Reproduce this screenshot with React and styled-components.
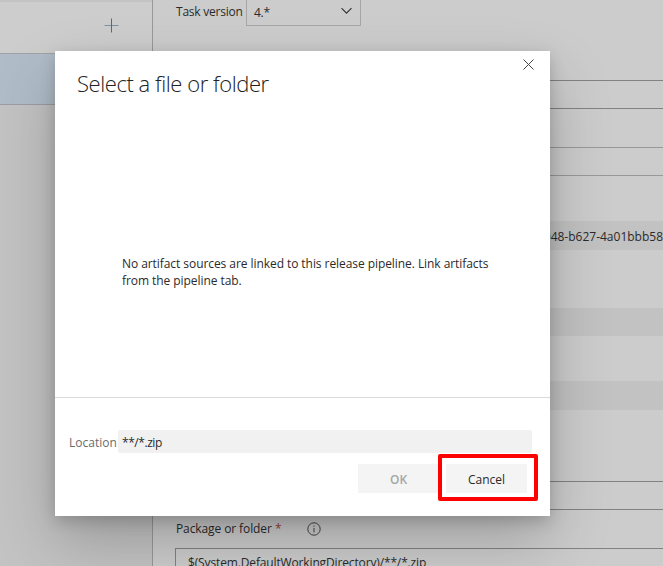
import React from "react";
import styled, { createGlobalStyle } from "styled-components";

const GlobalStyle = createGlobalStyle`
  * { box-sizing: border-box; }
  body { margin: 0; font-family: "Open Sans", "Noto Sans", sans-serif; font-size: 12px; color: #2a2a2a; }
`;

const Page = styled.div`
  position: relative;
  display: flex;
  width: 663px;
  height: 566px;
  overflow: hidden;
  background: #cccccc;
`;

const TaskList = styled.aside`
  width: 153px;
  flex: none;
  border-right: 1px solid #999999;
  background: #c3c3c3;
`;

const TaskHeader = styled.div`
  display: flex;
  justify-content: flex-end;
  align-items: center;
  height: 54px;
  padding: 0 33px 4px 0;
  border-top: 2px solid #c3c3c3;
  border-bottom: 1px solid #a0a3a5;
  background: #cdcdcd;
`;

const SelectedTask = styled.div`
  height: 51px;
  background: #b0bdc8;
  border-bottom: 1px solid #9b9fa3;
`;

const Form = styled.main`
  flex: 1;
  min-width: 0;
  display: flex;
  flex-direction: column;
  padding-left: 22px;
`;

const VersionRow = styled.div`
  display: flex;
  align-items: flex-start;
  height: 26px;
  flex: none;
  margin-bottom: 54px;
`;

const Text = styled.span`
  font-size: ${(p) => p.$size || 12}px;
  line-height: ${(p) => p.$line || 16}px;
  letter-spacing: ${(p) => p.$track || 0}px;
  color: ${(p) => p.$color || "#2a2a2a"};
  font-weight: ${(p) => p.$weight || 400};
  white-space: pre-line;
`;

const VersionLabel = styled.div`
  width: 71px;
  padding: 3px 0 0 1px;
  white-space: nowrap;
`;

const Select = styled.div`
  display: flex;
  justify-content: space-between;
  align-items: flex-start;
  width: 115px;
  height: 26px;
  padding: 5px 7px 0 7px;
  border: 1px solid #a6a6a6;
  border-top: 0;
`;

const Chevron = styled.svg`
  margin-top: 2px;
`;

const Input = styled.div`
  flex: none;
  height: 29px;
  margin-bottom: ${(p) => p.$gap}px;
  padding: 5px 12px;
  border: 1px solid ${(p) => p.$line || "#828282"};
  border-right: 0;
`;

const ReadonlyBand = styled.div`
  flex: none;
  display: flex;
  justify-content: flex-end;
  align-items: center;
  height: ${(p) => p.$height}px;
  margin-bottom: ${(p) => p.$gap}px;
  padding-top: 2px;
  background: #c2c2c2;
  white-space: nowrap;
`;

const FieldLabel = styled.div`
  flex: none;
  display: flex;
  align-items: center;
  height: 16px;
  margin-bottom: 11px;
  padding-left: 1px;
`;

const InfoIcon = styled.svg`
  margin-left: 25px;
`;

const Dialog = styled.section`
  position: absolute;
  left: 55px;
  top: 51px;
  display: flex;
  flex-direction: column;
  width: 495px;
  height: 465px;
  background: #fff;
  box-shadow: 0 25.6px 57.6px rgba(0, 0, 0, 0.22), 0 4.8px 14.4px rgba(0, 0, 0, 0.18);
`;

const DialogHeader = styled.header`
  display: flex;
  justify-content: space-between;
  align-items: flex-start;
  height: 60px;
  padding: 8px 16px 0 22px;
`;

const Title = styled.div`
  padding-top: 8px;
`;

const DialogBody = styled.div`
  flex: 1;
  padding: 144px 50px 0 67px;
  white-space: nowrap;
`;

const DialogFooter = styled.footer`
  height: 119px;
  padding: 32px 18px 0 14px;
  border-top: 1px solid #dadada;
`;

const LocationRow = styled.div`
  display: flex;
  align-items: center;
  height: 23px;
`;

const LocationLabel = styled.label`
  width: 49px;
  padding-top: 2px;
  white-space: nowrap;
`;

const LocationField = styled.div`
  flex: 1;
  display: flex;
  align-items: center;
  height: 23px;
  padding: 2px 4px 0;
  border-radius: 2px;
  background: #f1f1f1;
`;

const Actions = styled.div`
  display: flex;
  justify-content: flex-end;
  gap: 7px;
  margin-top: 11px;
  padding-right: 5px;
`;

const Button = styled.button`
  width: 81px;
  height: 29px;
  padding: 0;
  border: 0;
  background: #f4f4f4;
  font-family: inherit;
`;

const Highlight = styled.div`
  position: absolute;
  left: 438px;
  top: 454px;
  width: 99.5px;
  height: 46.5px;
  border: 4px solid #ff0000;
  border-radius: 2px;
`;

export default function App() {
  return (
    <>
      <GlobalStyle />
      <Page>
        <TaskList>
          <TaskHeader>
            <svg width="15" height="15" viewBox="0 0 15 15" fill="none">
              <path d="M0.5 7.5h14" stroke="#8292a4" />
              <path d="M7.5 0.5v14" stroke="#4f6b8b" />
            </svg>
          </TaskHeader>
          <SelectedTask />
        </TaskList>
        <Form>
          <VersionRow>
            <VersionLabel>
              <Text $track={-0.22}>Task version</Text>
            </VersionLabel>
            <Select>
              <Text $track={-0.3}>4.*</Text>
              <Chevron width="13" height="8" viewBox="0 0 13 8" fill="none">
                <path d="M1.5 1.2l5 5 5-5" stroke="#333" strokeWidth="1.1" />
              </Chevron>
            </Select>
          </VersionRow>
          <Input $gap={38} />
          <Input $gap={45} $line="#999" />
          <ReadonlyBand $height={29} $gap={58}>
            <Text>048-b627-4a01bbb58</Text>
          </ReadonlyBand>
          <ReadonlyBand $height={28} $gap={45} />
          <ReadonlyBand $height={29} $gap={71} />
          <Input $gap={11} />
          <FieldLabel>
            <Text $track={-0.1}>Package or folder</Text>
            <Text $color="#9a3b3b">&nbsp;*</Text>
            <InfoIcon width="14" height="14" viewBox="0 0 14 14" fill="none" stroke="#444">
              <circle cx="7" cy="7" r="6.2" />
              <path d="M7 6v4.4M7 3.6v1.2" />
            </InfoIcon>
          </FieldLabel>
          <Input $gap={0}>
            <Text $track={-0.14}>$(System.DefaultWorkingDirectory)/**/*.zip</Text>
          </Input>
        </Form>

        <Dialog>
          <DialogHeader>
            <Title>
              <Text $size={22} $line={32} $weight={300} $track={-0.44} $color="#222">
                Select a file or folder
              </Text>
            </Title>
            <svg width="11" height="11" viewBox="0 0 11 11" fill="none">
              <path d="M0.5 0.5l10 10M10.5 0.5l-10 10" stroke="#444" />
            </svg>
          </DialogHeader>
          <DialogBody>
            <Text $line={17} $track={-0.065}>
              No artifact sources are linked to this release pipeline. Link artifacts
              <br />
              from the pipeline tab.
            </Text>
          </DialogBody>
          <DialogFooter>
            <LocationRow>
              <LocationLabel>
                <Text $color="#6b6b6b">Location</Text>
              </LocationLabel>
              <LocationField>
                <Text $track={-0.45}>**/*.zip</Text>
              </LocationField>
            </LocationRow>
            <Actions>
              <Button>
                <Text $weight={600} $color="#a6a6a6">OK</Text>
              </Button>
              <Button>
                <Text>Cancel</Text>
              </Button>
            </Actions>
          </DialogFooter>
        </Dialog>
        <Highlight />
      </Page>
    </>
  );
}
